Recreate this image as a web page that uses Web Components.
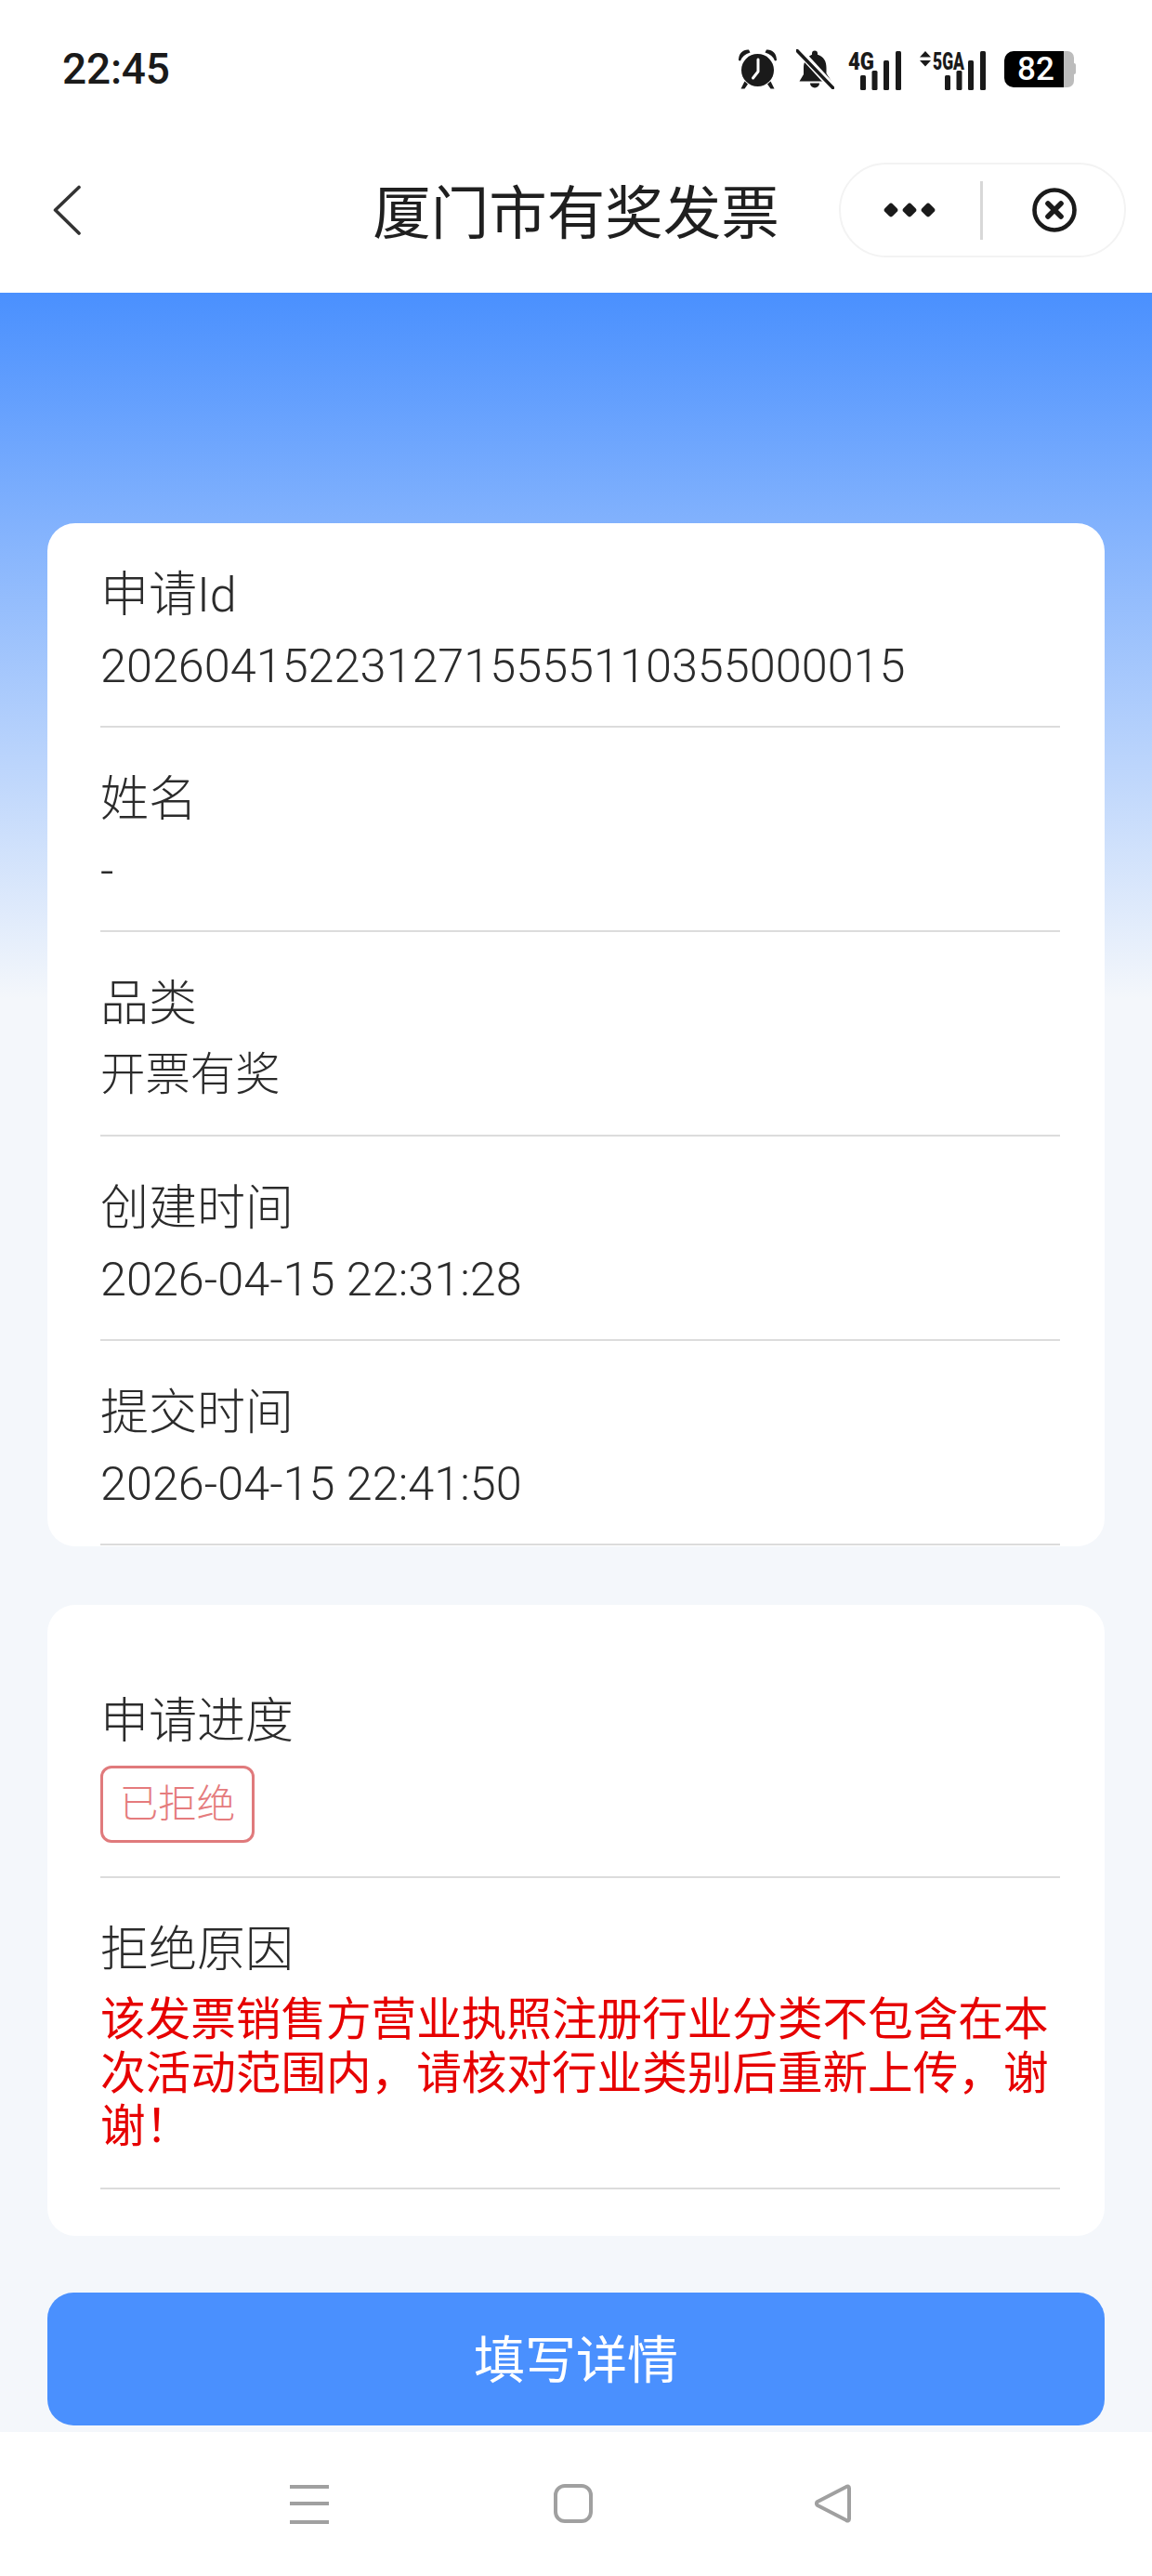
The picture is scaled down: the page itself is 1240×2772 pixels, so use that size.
<!DOCTYPE html>
<html lang="zh-CN">
<head>
<meta charset="UTF-8">
<title>厦门市有奖发票</title>
<style>
    html, body { margin: 0; padding: 0; }
    body {
        width: 1240px;
        height: 2772px;
        overflow: hidden;
        background: #fff;
        font-family: Roboto, "Noto Sans CJK SC", sans-serif;
    }
</style>
</head>
<body>
<app-page>
    <status-bar time="22:45"></status-bar>
    <title-bar>厦门市有奖发票</title-bar>

    <info-card slot="content">
        <info-row><span slot="label">申请Id</span>2026041522312715555110355000015</info-row>
        <info-row><span slot="label">姓名</span>-</info-row>
        <info-row cjk><span slot="label">品类</span>开票有奖</info-row>
        <info-row><span slot="label">创建时间</span>2026-04-15 22:31:28</info-row>
        <info-row><span slot="label">提交时间</span>2026-04-15 22:41:50</info-row>
    </info-card>

    <info-card slot="content" tail>
        <info-row lead tag><span slot="label">申请进度</span><status-tag>已拒绝</status-tag></info-row>
        <info-row danger><span slot="label">拒绝原因</span>该发票销售方营业执照注册行业分类不包含在本次活动范围内，请核对行业类别后重新上传，谢谢！</info-row>
    </info-card>

    <primary-button slot="content">填写详情</primary-button>

    <android-nav slot="footer"></android-nav>
</app-page>

<script>
class AppPage extends HTMLElement {
    constructor() {
        super();
        this.attachShadow({ mode: 'open' });
        this.shadowRoot.innerHTML = `
        <style>
            :host { display: flex; flex-direction: column; width: 1240px; height: 2772px; }
            header { background: #fff; height: 315px; flex: none; }
            main {
                flex: 1;
                display: flex;
                flex-direction: column;
                padding: 248px 51px 0;
                background: linear-gradient(180deg, #4a90fe 0, #f4f7fb 760px);
            }
            footer { flex: none; height: 155px; background: #fff; }
            ::slotted(info-card) { margin-bottom: 63px; }
            ::slotted(info-card[tail]) { margin-bottom: 61px; }
        </style>
        <header><slot></slot></header>
        <main><slot name="content"></slot></main>
        <footer><slot name="footer"></slot></footer>
    `;
    }
}

class StatusBar extends HTMLElement {
    constructor() {
        super();
        this.attachShadow({ mode: 'open' });
    }

    connectedCallback() {
        let bars = [[0, 79], [12.5, 74], [25, 63], [38, 53]];
        let signal = (x0) => bars.map(([x, top]) =>
            `<rect x="${x0 + x}" y="${top - 50}" width="6" height="${95 - top}" rx="1.5"/>`).join('');

        this.shadowRoot.innerHTML = `
        <style>
            :host {
                display: flex;
                align-items: center;
                justify-content: space-between;
                height: 148px;
                padding: 0 82px 0 67px;
                box-sizing: border-box;
                color: #1a1a1a;
            }
            .time { font: 500 46px/1 Roboto, sans-serif; letter-spacing: -0.2px; }
            .icons { display: flex; align-items: center; }
            svg { display: block; fill: #1a1a1a; }
            svg text { font-family: Roboto, sans-serif; font-weight: 900; }
            .alarm { margin-right: 20px; }
            .bell { margin-right: 15px; }
            .sig4 { margin-right: 19px; }
            .sig5 { margin-right: 20px; }
            .battery { display: flex; align-items: center; }
            .level {
                width: 64px; height: 39px;
                background: #000;
                border-radius: 10px 0 0 10px;
                color: #fff;
                font: 500 35px/39px Roboto, sans-serif;
                text-align: center;
                box-sizing: border-box;
                padding-left: 4px;
            }
            .rest { width: 11px; height: 39px; background: #bcbcbc; border-radius: 0 7px 7px 0; }
            .nub { width: 2px; height: 12px; background: #bcbcbc; border-radius: 0 2px 2px 0; }
        </style>
        <span class="time">${this.getAttribute('time')}</span>
        <div class="icons">
            <svg class="alarm" width="43" height="46" viewBox="0 0 43 46">
                <circle cx="21.5" cy="24.5" r="17.5"/>
                <path d="M1 14C1 6 6 2 12 2.500L13.500 5.500C8 7 4.500 10 3 14.500Z"/>
                <path d="M42 14C42 6 37 2 31 2.500L29.500 5.500C35 7 38.500 10 40 14.500Z"/>
                <path d="M7.500 36.500L3.500 44.500H7.500L11 39.500ZM35.500 36.500L39.500 44.500H35.500L32 39.500Z"/>
                <path d="M22 13V26L16.500 33" fill="none" stroke="#fff" stroke-width="3" stroke-linecap="round" stroke-linejoin="round"/>
            </svg>
            <svg class="bell" width="41" height="43" viewBox="0 0 41 43">
                <path d="M20 1.500a3 3 0 0 1 3 3v1.200C30 8 32.500 13 32.500 20v6l5.500 8.500H3.500L8 27v-7c0-6 2.500-11 9-14.300V4.500a3 3 0 0 1 3-3Z"/>
                <path d="M15 36.500h10a5 5 0 0 1-10 0Z"/>
                <path d="M1.500 0L41 43" stroke="#fff" stroke-width="8"/>
                <path d="M1 1.500L39.500 41.500" stroke="#1a1a1a" stroke-width="3.500" stroke-linecap="square" fill="none"/>
            </svg>
            <svg class="sig4" width="57" height="45" viewBox="0 0 57 45">
                <text x="0" y="23" font-size="25" textLength="28" lengthAdjust="spacingAndGlyphs">4G</text>
                <g transform="translate(13 0)">${signal(0)}</g>
            </svg>
            <svg class="sig5" width="72" height="45" viewBox="0 0 72 45">
                <path d="M7 3L13 9.500H1ZM7 19.500L13 13H1Z"/>
                <text x="15" y="23" font-size="25" textLength="34" lengthAdjust="spacingAndGlyphs">5GA</text>
                <g transform="translate(28 0)">${signal(0)}</g>
            </svg>
            <div class="battery">
                <div class="level">82</div>
                <div class="rest"></div>
                <div class="nub"></div>
            </div>
        </div>
    `;
    }
}

class TitleBar extends HTMLElement {
    constructor() {
        super();
        this.attachShadow({ mode: 'open' });
        this.shadowRoot.innerHTML = `
        <style>
            :host {
                display: grid;
                grid-template-columns: 1fr auto 1fr;
                align-items: center;
                height: 167px;
                padding-bottom: 11px;
                box-sizing: border-box;
                color: #1f1f1f;
            }
            .back { margin-left: 56px; display: block; }
            h1 {
                margin: 0 0 3px;
                font: 400 62.500px/1.2 "Noto Sans CJK SC", sans-serif;
            }
            .capsule {
                justify-self: end;
                margin-right: 28px;
                width: 309px;
                height: 102px;
                box-sizing: border-box;
                border: 2px solid #f3f3f3;
                border-radius: 51px;
                display: flex;
                align-items: center;
                background: #fff;
            }
            .dots { display: flex; gap: 6px; margin-left: 47px; }
            .dots i { width: 12px; height: 12px; background: #1a1a1a; transform: rotate(45deg); border-radius: 3px; margin: 0 1px; }
            .sep { width: 3px; height: 63px; background: #d8d8d8; margin-left: 49px; }
            .close { display: block; margin-left: 52px; }
        </style>
        <svg class="back" width="32" height="54" viewBox="0 0 32 54" fill="none" stroke="#333" stroke-width="3.600" stroke-linecap="round" stroke-linejoin="round">
            <path d="M29 2.500L3.500 27L29 52"/>
        </svg>
        <h1><slot></slot></h1>
        <div class="capsule">
            <div class="dots"><i></i><i></i><i></i></div>
            <div class="sep"></div>
            <svg class="close" width="50" height="50" viewBox="0 0 50 50" fill="none" stroke="#1a1a1a">
                <circle cx="25" cy="25" r="21.500" stroke-width="4.600"/>
                <path d="M18 18L32 32M32 18L18 32" stroke-width="5.600" stroke-linecap="round"/>
            </svg>
        </div>
    `;
    }
}

class InfoCard extends HTMLElement {
    constructor() {
        super();
        this.attachShadow({ mode: 'open' });
        this.shadowRoot.innerHTML = `
        <style>
            :host {
                display: block;
                background: #fff;
                border-radius: 30px;
                padding: 0 48px 1px 57px;
            }
            :host([tail]) { padding-bottom: 50px; }
        </style>
        <slot></slot>
    `;
    }
}

class InfoRow extends HTMLElement {
    constructor() {
        super();
        this.attachShadow({ mode: 'open' });
        this.shadowRoot.innerHTML = `
        <style>
            :host {
                display: block;
                padding: 50px 0 36px;
                border-bottom: 2px solid #dcdcdc;
                color: #2b2b2b;
                font-family: Roboto, "Noto Sans CJK SC", sans-serif;
                font-weight: 300;
            }
            :host([lead]) { padding-top: 98px; }
            .label { font-size: 52px; line-height: 56px; }
            .value { font-size: 50.400px; line-height: 56px; margin-top: 20px; }
            :host([cjk]) .value { font-size: 48.400px; }
            :host([tag]) .value { margin-top: 19px; line-height: 0; }
            :host([danger]) .value {
                color: #e60000;
                font-size: 48.600px;
                font-weight: 400;
                line-height: 57.500px;
                margin-top: 18px;
            }
        </style>
        <div class="label"><slot name="label"></slot></div>
        <div class="value"><slot></slot></div>
    `;
    }
}

class StatusTag extends HTMLElement {
    constructor() {
        super();
        this.attachShadow({ mode: 'open' });
        this.shadowRoot.innerHTML = `
        <style>
            :host {
                display: inline-flex;
                align-items: center;
                justify-content: center;
                width: 166px;
                height: 83px;
                box-sizing: border-box;
                border: 3px solid #e07a7c;
                border-radius: 12px;
                padding-bottom: 6px;
                color: #e57b7d;
                font: 300 41.500px/1 "Noto Sans CJK SC", sans-serif;
            }
        </style>
        <slot></slot>
    `;
    }
}

class PrimaryButton extends HTMLElement {
    constructor() {
        super();
        this.attachShadow({ mode: 'open' });
        this.shadowRoot.innerHTML = `
        <style>
            :host {
                display: flex;
                align-items: center;
                justify-content: center;
                height: 143px;
                box-sizing: border-box;
                padding-bottom: 6px;
                background: #4a90fe;
                border-radius: 28px;
                color: #fff;
                font: 400 55px/1 "Noto Sans CJK SC", sans-serif;
            }
        </style>
        <slot></slot>
    `;
    }
}

class AndroidNav extends HTMLElement {
    constructor() {
        super();
        this.attachShadow({ mode: 'open' });
        this.shadowRoot.innerHTML = `
        <style>
            :host {
                display: flex;
                align-items: flex-start;
                padding: 55px 0 0 312px;
            }
            svg { display: block; fill: none; stroke: #a0a0a0; stroke-width: 4; }
            .home { margin-left: 241px; }
            .back { margin-left: 235px; }
        </style>
        <svg width="42" height="44" viewBox="0 0 42 44">
            <path d="M0 4H42M0 22H42M0 42H42"/>
        </svg>
        <svg class="home" width="44" height="44" viewBox="0 0 44 44">
            <rect x="3" y="3" width="38" height="38" rx="10"/>
        </svg>
        <svg class="back" width="44" height="44" viewBox="0 0 44 44">
            <path d="M40 5.500C40 3.500 38.500 3 37 4L6 20C4.500 21 4.500 23 6 24L37 40C38.500 41 40 40.500 40 38.500Z" stroke-linejoin="round"/>
        </svg>
    `;
    }
}

customElements.define('app-page', AppPage);
customElements.define('status-bar', StatusBar);
customElements.define('title-bar', TitleBar);
customElements.define('info-card', InfoCard);
customElements.define('info-row', InfoRow);
customElements.define('status-tag', StatusTag);
customElements.define('primary-button', PrimaryButton);
customElements.define('android-nav', AndroidNav);
</script>
</body>
</html>
